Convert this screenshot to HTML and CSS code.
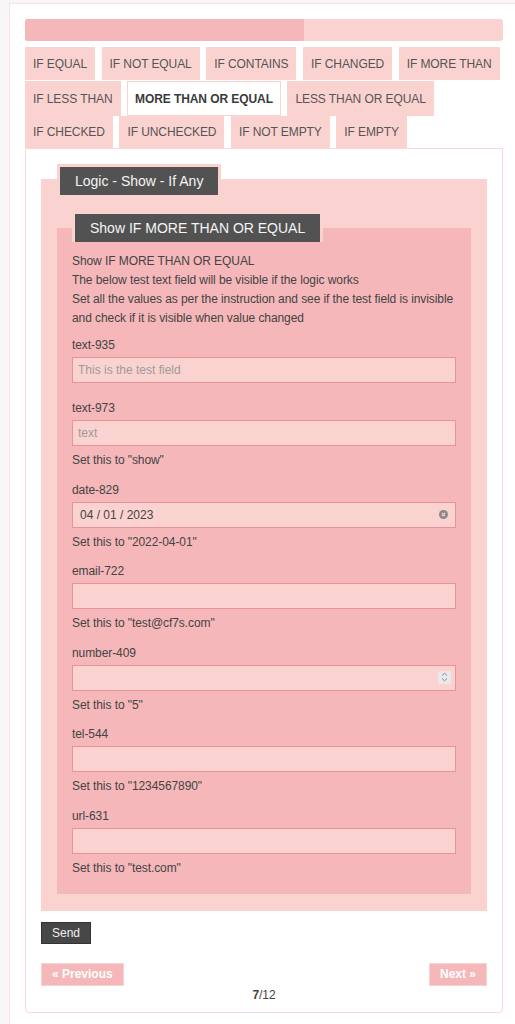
FILE: index.html
```html
<!DOCTYPE html>
<html lang="en">
<head>
    <meta charset="UTF-8">
    <meta name="viewport" content="width=device-width, initial-scale=1.0">
    <title>Logic - Show - If Any</title>
    <link rel="stylesheet" href="styles.css">
</head>
<body>
<div class="page">
  <div class="wizard">
    <div class="progress"><div class="progress-fill" style="width: 58.33%;"></div></div>

    <div class="tabs">
      <div class="tab-row">
        <span class="tab">IF EQUAL</span>
        <span class="tab">IF NOT EQUAL</span>
        <span class="tab">IF CONTAINS</span>
        <span class="tab">IF CHANGED</span>
        <span class="tab">IF MORE THAN</span>
      </div>
      <div class="tab-row tall">
        <span class="tab">IF LESS THAN</span>
        <span class="tab active">MORE THAN OR EQUAL</span>
        <span class="tab">LESS THAN OR EQUAL</span>
      </div>
      <div class="tab-row short">
        <span class="tab">IF CHECKED</span>
        <span class="tab">IF UNCHECKED</span>
        <span class="tab">IF NOT EMPTY</span>
        <span class="tab">IF EMPTY</span>
      </div>
    </div>

    <div class="panel">
      <div class="fieldset">
        <div class="legend">Logic - Show - If Any</div>

        <div class="fieldset inner">
          <div class="legend">Show IF MORE THAN OR EQUAL</div>

          <p class="intro">
            Show IF MORE THAN OR EQUAL<br>
            The below test text field will be visible if the logic works<br>
            Set all the values as per the instruction and see if the test field is invisible and check if it is visible when value changed
          </p>

          <div class="field no-hint">
            <label>text-935</label>
            <input type="text" placeholder="This is the test field">
          </div>

          <div class="field">
            <label>text-973</label>
            <input type="text" placeholder="text">
            <p class="hint">Set this to "show"</p>
          </div>

          <div class="field">
            <label>date-829</label>
            <span class="input-wrap">
              <input type="text" class="date" value="04 / 01 / 2023">
              <span class="clear-icon">
                <svg width="9" height="9" viewBox="0 0 10 10">
                  <circle cx="5" cy="5" r="5" fill="#8c8688"/>
                  <path d="M3.2 3.2 L6.8 6.8 M6.8 3.2 L3.2 6.8" stroke="#fad3d0" stroke-width="1.3"/>
                </svg>
              </span>
            </span>
            <p class="hint">Set this to "2022-04-01"</p>
          </div>

          <div class="field">
            <label>email-722</label>
            <input type="email">
            <p class="hint">Set this to "test@cf7s.com"</p>
          </div>

          <div class="field">
            <label>number-409</label>
            <span class="input-wrap">
              <input type="text">
              <span class="spin-icon">
                <svg width="7" height="10" viewBox="0 0 7 10">
                  <path d="M1 3.5 L3.5 1.2 L6 3.5 M1 6.5 L3.5 8.8 L6 6.5" fill="none" stroke="#8a8a90" stroke-width="1"/>
                </svg>
              </span>
            </span>
            <p class="hint">Set this to "5"</p>
          </div>

          <div class="field">
            <label>tel-544</label>
            <input type="tel">
            <p class="hint">Set this to "1234567890"</p>
          </div>

          <div class="field">
            <label>url-631</label>
            <input type="url">
            <p class="hint">Set this to "test.com"</p>
          </div>
        </div>
      </div>

      <button class="send">Send</button>

      <div class="pager">
        <button class="nav-btn">&laquo; Previous</button>
        <button class="nav-btn">Next &raquo;</button>
      </div>
      <div class="counter"><b>7</b>/12</div>
    </div>
  </div>
</div>
</body>
</html>
```

FILE: styles.css
```css
* {
    box-sizing: border-box;
}

body {
    margin: 0;
    background: #f7f7f7;
    font-family: "Liberation Sans", Arial, Helvetica, sans-serif;
    font-size: 12px;
    letter-spacing: -0.08px;
    color: #444;
}

.page {
    margin: 3px 0 0 9px;
    min-height: calc(100vh - 3px);
    padding: 15px 12px 0 15px;
    background: #fff;
    border-top: 1px solid #fbe2e2;
    border-left: 1px solid #fbe2e2;
}

/* Progress bar */
.progress {
    height: 22px;
    background: #fad3d0;
    border-radius: 3px;
    overflow: hidden;
}

.progress-fill {
    height: 100%;
    background: #f5b7b9;
}

/* Tabs */
.tabs {
    margin-top: 6px;
}

.tab-row {
    display: flex;
    gap: 6.5px;
    height: 33px;
    margin-bottom: 1px;
}

.tab-row.tall {
    height: 35px;
    margin-bottom: 0;
}

.tab-row.short {
    height: 32px;
    margin-bottom: 0;
}

.tab {
    display: flex;
    align-items: center;
    padding: 0 8px;
    background: #fad3d0;
    color: #555;
    white-space: nowrap;
}

.tab.active {
    background: #fff;
    border: 1px solid #fad3d0;
    padding: 0 7px;
    font-weight: bold;
    color: #3a3a3a;
}

/* Panel */
.panel {
    border: 1px solid #fbd6d4;
    border-radius: 0 0 4px 4px;
    padding: 15px 15px 8px;
}

.fieldset {
    display: flow-root;
    margin-top: 15px;
    padding: 0 16px 17px;
    background: #fad3d0;
}

.fieldset.inner {
    margin-top: 33px;
    padding: 0 15px 16px;
    background: #f5b7b9;
}

.legend {
    width: fit-content;
    margin: -15px 0 0 0;
    padding: 0 15px;
    line-height: 28px;
    font-size: 14px;
    letter-spacing: 0;
    color: #f4f4f4;
    background: #525252;
    border: 3px solid #fad3d0;
    border-bottom: 0;
}

.inner .legend {
    margin-top: -17px;
}

.intro {
    margin: 9.5px 0 0;
    line-height: 19px;
}

/* Fields */
.field {
    margin-top: 10.5px;
}

.intro + .field {
    margin-top: 8px;
}

.field.no-hint {
    margin-bottom: 16.5px;
}

.field label {
    display: block;
    line-height: 19px;
}

.field input {
    display: block;
    width: 100%;
    height: 26px;
    margin-top: 2px;
    padding: 0 5px;
    font-family: inherit;
    font-size: 12px;
    color: #444;
    background: #fad3d0;
    border: 1px solid #e8939a;
    outline: none;
}

.field input::placeholder {
    color: #a09a9b;
}

.field input.date {
    padding-left: 7px;
}

.input-wrap {
    display: block;
    position: relative;
}

.clear-icon {
    position: absolute;
    right: 8px;
    top: 8.5px;
    line-height: 0;
}

.spin-icon {
    position: absolute;
    right: 5px;
    top: 6px;
    width: 13px;
    height: 13px;
    display: flex;
    align-items: center;
    justify-content: center;
    background: #ebe8ec;
    border-radius: 2px;
}

.hint {
    margin: 5px 0 0;
    line-height: 19px;
}

/* Buttons */
.send {
    display: block;
    margin-top: 11px;
    height: 22px;
    padding: 0 10px;
    font-family: inherit;
    font-size: 12px;
    color: #eee;
    background: #474747;
    border: 1px solid #333;
    cursor: pointer;
}

.pager {
    display: flex;
    justify-content: space-between;
    margin-top: 19px;
}

.nav-btn {
    height: 23px;
    padding: 0 10px;
    font-family: inherit;
    font-size: 12px;
    font-weight: bold;
    color: #fff;
    background: #f5b7b9;
    border: 1px solid #fad3d0;
    cursor: pointer;
}

.counter {
    text-align: center;
    line-height: 18px;
    color: #444;
}
```
